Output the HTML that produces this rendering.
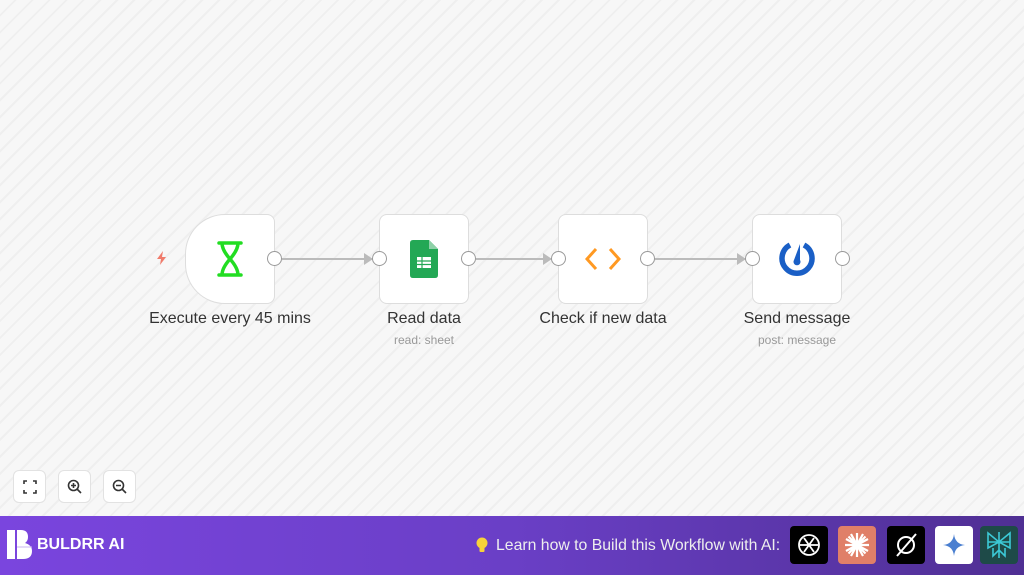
<!DOCTYPE html>
<html><head><style>
*{margin:0;padding:0;box-sizing:border-box}
body{width:1024px;height:575px;overflow:hidden;font-family:"Liberation Sans",sans-serif;position:relative;
background:#f6f6f6 repeating-linear-gradient(135deg,#f7f7f7 0 10px,#efefef 10px 12px);}
.node{position:absolute;top:214px;width:90px;height:90px;background:#fff;border:1px solid #ddd;border-radius:8px;display:flex;align-items:center;justify-content:center}
.h{position:absolute;top:251px;width:15px;height:15px;border-radius:50%;background:#fff;border:1.5px solid #999}
.line{position:absolute;top:258px;height:2px;background:#bbb}
.arr{position:absolute;top:253px;width:0;height:0;border-top:6px solid transparent;border-bottom:6px solid transparent;border-left:9px solid #bbb}
.lbl{position:absolute;top:310px;font-size:16px;color:#333;text-align:center;width:200px}
.sub{position:absolute;top:333px;font-size:12px;color:#999;text-align:center;width:200px}
.zb{position:absolute;top:470px;width:33px;height:33px;background:#fff;border:1px solid #e2e2e2;border-radius:6px;display:flex;align-items:center;justify-content:center}
.foot{position:absolute;left:0;top:516px;width:1024px;height:59px;background:linear-gradient(90deg,#7a45de,#6a3fc6 50%,#4f2f93);}
.ic{position:absolute;top:526px;width:38px;height:38px;border-radius:4px;display:flex;align-items:center;justify-content:center}
</style></head><body>
<svg style="position:absolute;left:154px;top:250px" width="16" height="16" viewBox="0 0 16 16"><path d="M9 1 L3 9 H7 L6 15 L12 7 H8 Z" fill="#f07b6b"/></svg>
<div class="node" style="left:185px;border-radius:40px 8px 8px 40px"><svg width="26" height="36" viewBox="0 0 26 36"><path d="M2 2H24M2 34H24M5 2Q5 9 13 18Q21 27 21 34M21 2Q21 9 13 18Q5 27 5 34" stroke="#22dd22" stroke-width="3.5" fill="none" stroke-linecap="round"/></svg></div>
<div class="node" style="left:379px"><svg width="28" height="38" viewBox="0 0 28 38"><path d="M3 0H19L28 9V35Q28 38 25 38H3Q0 38 0 35V3Q0 0 3 0Z" fill="#23a855"/><path d="M19 0V9H28Z" fill="#8ed1a8"/><rect x="7" y="17" width="14" height="11" fill="#fff"/><path d="M7 21H21M7 24.5H21M12 17V28" stroke="#23a855" stroke-width="1.2"/></svg></div>
<div class="node" style="left:558px"><svg width="36" height="24" viewBox="0 0 36 24"><path d="M11 2L2 12L11 22M25 2L34 12L25 22" stroke="#ff9922" stroke-width="3" fill="none"/></svg></div>
<div class="node" style="left:752px"><svg width="38" height="38" viewBox="0 0 38 38"><path d="M12 5A15 15 0 1 0 26 5" stroke="#1a5fc6" stroke-width="5.5" fill="none"/><path d="M22 4L22 20A3.5 3.5 0 1 1 16 20Z" fill="#1a5fc6"/></svg></div>
<div class="h" style="left:267px"></div><div class="line" style="left:282px;width:90px"></div><div class="arr" style="left:364px"></div><div class="h" style="left:372px"></div>
<div class="h" style="left:461px"></div><div class="line" style="left:476px;width:75px"></div><div class="arr" style="left:543px"></div><div class="h" style="left:551px"></div>
<div class="h" style="left:640px"></div><div class="line" style="left:655px;width:90px"></div><div class="arr" style="left:737px"></div><div class="h" style="left:745px"></div>
<div class="h" style="left:835px"></div>
<div class="lbl" style="left:130px">Execute every 45 mins</div>
<div class="lbl" style="left:324px">Read data</div><div class="sub" style="left:324px">read: sheet</div>
<div class="lbl" style="left:503px">Check if new data</div>
<div class="lbl" style="left:697px">Send message</div><div class="sub" style="left:697px">post: message</div>
<div class="zb" style="left:13px"><svg width="14" height="14" viewBox="0 0 14 14"><path d="M1 4V1H4M10 1H13V4M13 10V13H10M4 13H1V10" stroke="#333" stroke-width="1.6" fill="none"/></svg></div>
<div class="zb" style="left:58px"><svg width="15" height="15" viewBox="0 0 15 15"><circle cx="6.5" cy="6.5" r="5" stroke="#333" stroke-width="1.6" fill="none"/><path d="M10 10L14 14M4 6.5H9M6.5 4V9" stroke="#333" stroke-width="1.6"/></svg></div>
<div class="zb" style="left:103px"><svg width="15" height="15" viewBox="0 0 15 15"><circle cx="6.5" cy="6.5" r="5" stroke="#333" stroke-width="1.6" fill="none"/><path d="M10 10L14 14M4 6.5H9" stroke="#333" stroke-width="1.6"/></svg></div>
<div class="foot">
<svg style="position:absolute;left:7px;top:14px" width="25" height="29" viewBox="0 0 25 29"><path d="M0 0H8V29H0Z M10 0H14Q21 0 21 7Q21 11 18 13Q25 15 25 21Q25 29 16 29H10Z" fill="#fff"/><path d="M10 17H25" stroke="#c9b5f0" stroke-width="1"/></svg>
<div style="position:absolute;left:37px;top:20px;color:#fff;font-weight:bold;font-size:16px">BULDRR AI</div>
<svg style="position:absolute;left:476px;top:21px" width="12" height="17" viewBox="0 0 12 17"><circle cx="6" cy="6" r="5.5" fill="#f7d23a"/><rect x="3.5" y="10" width="5" height="5" rx="1" fill="#f7d23a"/></svg>
<div style="position:absolute;left:496px;top:21px;color:#eee;font-size:15.8px">Learn how to Build this Workflow with AI:</div>
</div>
<div class="ic" style="left:790px;background:#000"><svg width="26" height="26" viewBox="0 0 26 26" fill="none" stroke="#fff" stroke-width="1.8"><circle cx="13" cy="13" r="10"/><path d="M8 6L18 20M18 6L8 20M4 13H22"/></svg></div>
<div class="ic" style="left:838px;background:#e07f68"><svg width="28" height="28" viewBox="0 0 28 28" stroke="#fff" stroke-width="2.2"><path d="M14 2V26M2 14H26M5.5 5.5L22.5 22.5M22.5 5.5L5.5 22.5M8 3L20 25M20 3L8 25M3 8L25 20M3 20L25 8"/></svg></div>
<div class="ic" style="left:887px;background:#000"><svg width="26" height="26" viewBox="0 0 26 26" fill="none" stroke="#fff" stroke-width="2"><circle cx="13" cy="13" r="8"/><path d="M4 24L23 2"/></svg></div>
<div class="ic" style="left:935px;background:#fff"><svg width="22" height="22" viewBox="0 0 22 22"><path d="M11 0Q12 10 22 11Q12 12 11 22Q10 12 0 11Q10 10 11 0Z" fill="#4a7fd0"/></svg></div>
<div class="ic" style="left:980px;background:#1e4a48"><svg width="28" height="30" viewBox="0 0 28 30" fill="none" stroke="#3cc9d6" stroke-width="1.6"><path d="M3 3L14 12L25 3V18L14 12L3 18Z M14 2V28M3 12H25M8 18V26L14 20L20 26V18"/></svg></div>
</body></html>
